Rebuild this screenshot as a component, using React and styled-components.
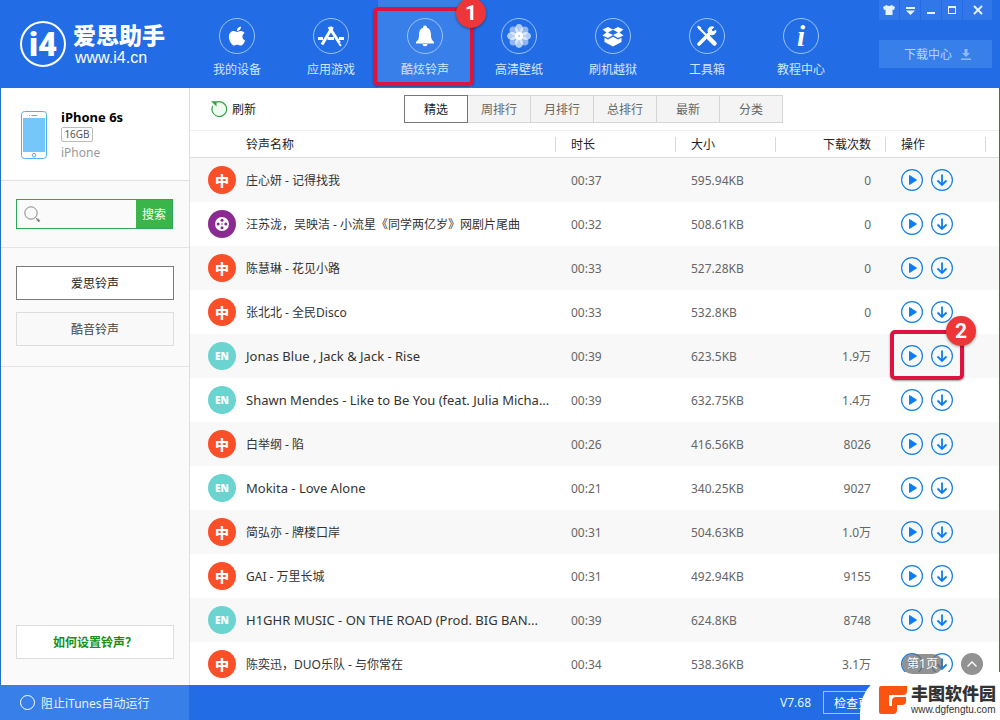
import React, { useState } from 'react';
import styled, { createGlobalStyle } from 'styled-components';
import { FaApple } from 'react-icons/fa';

const GlobalStyle = createGlobalStyle`
    * {
        box-sizing: border-box;
    }
    body {
        margin: 0;
        font-family: 'Noto Sans', 'Noto Sans CJK SC', sans-serif;
        font-size: 12px;
        color: #333;
    }
    button, input {
        font: inherit;
        color: inherit;
        margin: 0;
        padding: 0;
    }
    button {
        cursor: pointer;
    }
`
const Window = styled.div`
    display: flex;
    flex-direction: column;
    height: 100vh;
    background-color: #fff;
    position: relative;
`

/* header */
const Header = styled.header`
    display: flex;
    height: 88px;
    flex-shrink: 0;
    background-color: #226de6;
    color: #fff;
`
const Brand = styled.a`
    display: flex;
    gap: 7px;
    width: 190px;
    padding: 20px 0 0 20px;
    color: #fff;
    text-decoration: none;
`
const BrandName = styled.div`
    font-size: 23px;
    font-weight: 900;
    line-height: 28px;
    padding-top: 1px;
`
const BrandUrl = styled.div`
    font-family: 'Liberation Sans', sans-serif;
    font-size: 16px;
    line-height: 18px;
    padding-left: 2px;
`
const Nav = styled.nav`
    display: flex;
    flex: 1;
`
const NavItem = styled.a`
    position: relative;
    display: flex;
    flex-direction: column;
    align-items: center;
    gap: 7px;
    width: 94px;
    padding-top: 18px;
    line-height: 18px;
    color: #d3e6ff;
    text-decoration: none;
    background-color: ${props => props.$active ? '#397fe9' : 'transparent'};
`
const NavCircle = styled.span`
    display: flex;
    align-items: center;
    justify-content: center;
    width: 36px;
    height: 36px;
    border: 1px solid #9cc4fb;
    border-radius: 50%;
    color: #fff;
`
const HeaderRight = styled.div`
    display: flex;
    flex-direction: column;
    gap: 20px;
    width: 113px;
    margin-right: 8px;
`
const WindowButtons = styled.div`
    display: flex;
    gap: 1px;
    height: 20px;
`
const WindowButton = styled.button`
    display: flex;
    align-items: center;
    justify-content: center;
    flex: ${props => props.$wide ? '1' : '0 0 20px'};
    border: 0;
    background-color: #3177e9;
    color: #e6f3ff;
`
const DownloadCenter = styled.button`
    display: flex;
    align-items: center;
    justify-content: center;
    gap: 9px;
    height: 28px;
    padding-left: 4px;
    border: 0;
    background-color: #397fea;
    color: #b5d4fb;
`

/* numbered marks */
const Mark = styled.span`
    position: absolute;
    inset: ${props => props.$inset};
    border: 4px solid #dc1440;
    border-radius: 5px;
    box-shadow: 0 1px 2px rgba(0,0,0,0.4);
    pointer-events: none;
    z-index: 2;
`
const MarkNumber = styled.span`
    position: absolute;
    top: ${props => props.$top};
    right: -16px;
    width: 30px;
    height: 30px;
    border-radius: 50%;
    background-color: #ee3638;
    box-shadow: 0 1px 3px rgba(0,0,0,0.4);
    color: #fff;
    font-family: Roboto, sans-serif;
    font-size: 21px;
    font-weight: bold;
    line-height: 30px;
    text-align: center;
`

/* body */
const Body = styled.div`
    display: flex;
    flex: 1;
    min-height: 0;
    border-left: 1px solid #2470c8;
    border-right: 1px solid #2470a8;
`
const Sidebar = styled.aside`
    display: flex;
    flex-direction: column;
    width: 189px;
    flex-shrink: 0;
    background-color: #fafafa;
    border-right: 1px solid #ddd;
`
const Device = styled.section`
    display: flex;
    gap: 14px;
    height: 93px;
    padding: 19px 0 0 20px;
    background-color: #fff;
    border-bottom: 1px solid #e0e0e0;
`
const DeviceName = styled.div`
    font-size: 13px;
    font-weight: bold;
    line-height: 20px;
    color: #000;
`
const DeviceSize = styled.div`
    width: 32px;
    height: 15px;
    border: 1px solid #bbb;
    border-radius: 2px;
    font-size: 10px;
    line-height: 13px;
    text-align: center;
    color: #555;
`
const DeviceModel = styled.div`
    line-height: 22px;
    color: #999;
`
const SideSection = styled.section`
    display: flex;
    flex-direction: column;
    gap: 12px;
    padding: ${props => props.$padding};
    border-bottom: 1px solid #e4e4e4;
`
const Search = styled.form`
    display: flex;
    align-items: center;
    height: 30px;
    padding-left: 7px;
    margin-right: 1px;
    border: 1px solid #2ea556;
`
const SearchInput = styled.input`
    flex: 1;
    min-width: 0;
    height: 28px;
    margin-left: 6px;
    border: 0;
    outline: none;
    background: transparent;
`
const SearchButton = styled.button`
    width: 36px;
    height: 28px;
    border: 0;
    background-color: #39b54a;
    color: #fff;
`
const SideButton = styled.button`
    height: 34px;
    border: 1px solid ${props => props.$active ? '#7a7a7a' : '#ddd'};
    background-color: ${props => props.$active ? '#fff' : '#f9f9f9'};
    color: ${props => props.$active ? '#222' : '#444'};
`
const HelpButton = styled.button`
    height: 34px;
    margin: auto 15px 26px;
    border: 1px solid #ddd;
    background-color: #fff;
    color: #14901a;
    font-weight: bold;
`
const Main = styled.main`
    position: relative;
    flex: 1;
    min-width: 0;
    overflow: hidden;
`
const Toolbar = styled.div`
    display: grid;
    grid-template-columns: 1fr auto 1fr;
    align-items: center;
    height: 43px;
    padding-right: 2px;
    padding-bottom: 1px;
    border-bottom: 1px solid #f0f0f0;
`
const Refresh = styled.button`
    display: flex;
    align-items: center;
    gap: 4px;
    padding-left: 20px;
    border: 0;
    background: none;
    color: #222;
`
const Tabs = styled.div`
    display: flex;
    height: 28px;
`
const Tab = styled.button`
    width: 63px;
    border: 1px solid #d4d4d4;
    border-left-width: 0;
    background-color: #f4f4f4;
    color: #666;
    ${props => props.$active && `
        width: 64px;
        border-color: #777;
        border-left-width: 1px;
        background-color: #fff;
        color: #222;
    `}
`
const Table = styled.table`
    width: 100%;
    table-layout: fixed;
    border-spacing: 0;
`
const Th = styled.th`
    width: ${props => props.$width || 'auto'};
    height: 27px;
    padding: 0 15px 1px;
    padding-left: ${props => props.$name ? '56px' : '15px'};
    border-bottom: 1px solid #ddd;
    font-weight: normal;
    text-align: ${props => props.$right ? 'right' : 'left'};
    color: #222;
    background: linear-gradient(#d8d8d8, #d8d8d8) no-repeat right center / 1px 15px;
`
const ThEnd = styled.td`
    width: 13px;
    padding: 0;
    border-bottom: 1px solid #ddd;
`
const Row = styled.tr`
    &:nth-child(odd) {
        background-color: #f8f8f8;
    }
`
const Td = styled.td`
    height: 44px;
    padding: 0 15px;
    text-align: ${props => props.$right ? 'right' : 'left'};
    color: #666;
`
const NameTd = styled.td`
    padding: 0 0 0 18px;
`
const EndTd = styled.td`
    padding: 0;
`
const Song = styled.div`
    display: flex;
    align-items: center;
    gap: 10px;
    color: #333;
`
const SongName = styled.span`
    font-size: ${props => props.$kind === 'en' ? '13px' : '12px'};
    white-space: nowrap;
`
const colors = { cn: '#fa4f28', en: '#6bd4d0', film: '#8b2a91' };
const Badge = styled.span`
    display: flex;
    align-items: center;
    justify-content: center;
    width: 28px;
    height: 28px;
    flex-shrink: 0;
    border-radius: 50%;
    background-color: ${props => colors[props.$kind]};
    color: #fff;
    font-size: ${props => props.$kind === 'cn' ? '14px' : '10px'};
    font-weight: 900;
`
const Actions = styled.div`
    position: relative;
    display: flex;
    gap: 8px;
    width: 52px;
`
const ActionButton = styled.button`
    display: flex;
    width: 22px;
    height: 22px;
    border: 0;
    background: none;
    color: #1480e8;
`
const Floating = styled.div`
    position: absolute;
    right: 16px;
    bottom: 10px;
    display: flex;
    align-items: center;
    gap: 18px;
    z-index: 3;
`
const PageLabel = styled.span`
    width: 41px;
    height: 20px;
    border-radius: 10px;
    background-color: rgba(110,110,110,0.75);
    color: #fff;
    line-height: 20px;
    text-align: center;
`
const TopButton = styled.button`
    display: flex;
    align-items: center;
    justify-content: center;
    width: 22px;
    height: 22px;
    border: 0;
    border-radius: 50%;
    background-color: #929292;
    color: #fff;
`

/* footer */
const Footer = styled.footer`
    display: flex;
    align-items: center;
    height: 35px;
    flex-shrink: 0;
    background-color: #226de6;
    color: #fff;
`
const ITunes = styled.label`
    display: flex;
    align-items: center;
    gap: 6px;
    width: 189px;
    height: 35px;
    padding-left: 20px;
    background-color: #397fe9;
    color: #e6f2ff;
`
const Round = styled.input`
    appearance: none;
    width: 15px;
    height: 15px;
    border: 1px solid #fff;
    border-radius: 50%;
    &:checked {
        background-color: #fff;
    }
`
const Version = styled.span`
    margin-left: auto;
    margin-right: 12px;
    color: #e6f2ff;
`
const Update = styled.button`
    width: 70px;
    height: 23px;
    margin-right: 107px;
    border: 1px solid #9cc4fb;
    background: none;
`
const SiteMark = styled.a`
    position: absolute;
    right: 0;
    bottom: 0;
    display: flex;
    align-items: center;
    gap: 4px;
    width: 140px;
    height: 48px;
    padding: 8px 0 0 19px;
    border-radius: 40px 0 0 0;
    background-color: #fff;
    color: #333;
    text-decoration: none;
    z-index: 2;
    svg {
        flex-shrink: 0;
    }
`
const SiteName = styled.div`
    font-size: 17px;
    font-weight: 900;
    line-height: 20px;
    white-space: nowrap;
`
const SiteUrl = styled.div`
    font-family: 'Liberation Sans', sans-serif;
    font-size: 10px;
    line-height: 12px;
`

const AppStoreIcon = () => (
    <svg width="28" height="24" viewBox="0 0 28 24" fill="none" stroke="currentColor" strokeWidth="3">
        <path d="M15.5 3 L5 20.5" />
        <path d="M12 3 L22.5 19" />
        <path d="M1 14.5 H6 M10.5 14.5 H17 M22 14.5 H27" />
        <path d="M22 19.5 L24 22" strokeWidth="2" />
    </svg>
);

const BellIcon = () => (
    <svg width="20" height="22" viewBox="0 0 20 22" fill="currentColor">
        <circle cx="10" cy="2.4" r="2" />
        <path d="M10 2.5 C5.5 2.5 4 6 4 10 C4 14 3 15 1 17 V18.5 H19 V17 C17 15 16 14 16 10 C16 6 14.5 2.5 10 2.5 Z" />
        <path d="M7.5 19 H12.5 A2.5 2.3 0 0 1 7.5 19 Z" />
    </svg>
);

const FlowerIcon = () => (
    <svg width="26" height="26" viewBox="0 0 26 26">
        {[0, 45, 90, 135, 180, 225, 270, 315].map(angle => (
            <ellipse key={angle} cx="13" cy="6" rx="4" ry="5" fill="#fff" fillOpacity={angle % 90 ? 0.5 : 0.65} transform={`rotate(${angle} 13 13)`} />
        ))}
        <circle cx="13" cy="13" r="4" fill="#fff" />
        <circle cx="13" cy="13" r="1" fill="#9cc4fb" />
    </svg>
);

const BoxIcon = () => (
    <svg width="24" height="22" viewBox="0 0 24 22" fill="none">
        <path d="M12 4.5 L7 2 L1.5 4.5 L5.5 7.5 L1.5 10.5 L7 13 L12 10 L17 13 L22.5 10.5 L18.5 7.5 L22.5 4.5 L17 2 Z" fill="currentColor" />
        <path d="M12 4.8 L17 7.5 L12 10 L7 7.5 Z" fill="#226de6" />
        <path d="M3.5 12.8 L7 14.4 L12 11.8 L17 14.4 L20.5 12.8 V17 L12 21.5 L3.5 17 Z" fill="currentColor" />
    </svg>
);

const ToolsIcon = () => (
    <svg width="22" height="22" viewBox="0 0 22 22" fill="none" stroke="currentColor">
        <path d="M2.5 2.5 L11 11" strokeWidth="2" />
        <path d="M1.5 1.5 L5 3.3" strokeWidth="2" />
        <path d="M12.5 12.5 L18.5 18.5" strokeWidth="4.5" strokeLinecap="round" />
        <path d="M3 19 L14 8" strokeWidth="3.6" strokeLinecap="round" />
        <path d="M17.8 2.2 A4 4 0 1 0 20 5.5 L16.8 6.8 L15 4.8 Z" fill="currentColor" strokeWidth="1" />
    </svg>
);

const InfoIcon = () => (
    <svg width="22" height="34" viewBox="0 0 22 34">
        <text x="11" y="27" textAnchor="middle" fill="currentColor" fontFamily="Liberation Serif, serif" fontSize="29" fontWeight="bold" fontStyle="italic">i</text>
    </svg>
);

const ShirtIcon = () => (
    <svg width="12" height="10" viewBox="0 0 12 10" fill="currentColor">
        <path d="M3.5 0 Q6 2 8.5 0 L12 2 L11 5 L9.5 4.5 V10 H2.5 V4.5 L1 5 L0 2 Z" />
    </svg>
);

const MenuIcon = () => (
    <svg width="9" height="9" viewBox="0 0 9 9" fill="currentColor">
        <path d="M0 1 H9 V3 H0 Z M0 4.5 H9 L4.5 9 Z" />
    </svg>
);

const MinIcon = () => (
    <svg width="8" height="8" viewBox="0 0 8 8" fill="currentColor">
        <path d="M0 6 H8 V8 H0 Z" />
    </svg>
);

const MaxIcon = () => (
    <svg width="8" height="8" viewBox="0 0 8 8" fill="currentColor">
        <path d="M0 0 H8 V8 H0 Z M1 2 V7 H7 V2 Z" fillRule="evenodd" />
    </svg>
);

const CloseIcon = () => (
    <svg width="10" height="10" viewBox="0 0 10 10" stroke="currentColor" strokeWidth="2">
        <path d="M1 1 L9 9 M9 1 L1 9" />
    </svg>
);

const FilmIcon = () => (
    <svg width="14" height="14" viewBox="0 0 14 14">
        <circle cx="7" cy="7" r="7" fill="#fff" />
        <g fill="#8b2a91">
            <circle cx="7" cy="3.2" r="1.5" />
            <circle cx="7" cy="10.8" r="1.5" />
            <circle cx="3.2" cy="7" r="1.5" />
            <circle cx="10.8" cy="7" r="1.5" />
            <circle cx="7" cy="7" r="0.8" />
        </g>
    </svg>
);

const navItems = [
    { label: '我的设备', icon: <FaApple size={22} /> },
    { label: '应用游戏', icon: <AppStoreIcon /> },
    { label: '酷炫铃声', icon: <BellIcon />, mark: 1 },
    { label: '高清壁纸', icon: <FlowerIcon /> },
    { label: '刷机越狱', icon: <BoxIcon /> },
    { label: '工具箱', icon: <ToolsIcon /> },
    { label: '教程中心', icon: <InfoIcon /> },
];

const tabs = ['精选', '周排行', '月排行', '总排行', '最新', '分类'];

const songs = [
    { kind: 'cn', name: '庄心妍 - 记得找我', time: '00:37', size: '595.94KB', count: '0' },
    { kind: 'film', name: '汪苏泷，吴映洁 - 小流星《同学两亿岁》网剧片尾曲', time: '00:32', size: '508.61KB', count: '0' },
    { kind: 'cn', name: '陈慧琳 - 花见小路', time: '00:33', size: '527.28KB', count: '0' },
    { kind: 'cn', name: '张北北 - 全民Disco', time: '00:33', size: '532.8KB', count: '0' },
    { kind: 'en', name: 'Jonas Blue , Jack & Jack - Rise', time: '00:39', size: '623.5KB', count: '1.9万', mark: 2 },
    { kind: 'en', name: 'Shawn Mendes - Like to Be You (feat. Julia Micha...', time: '00:39', size: '632.75KB', count: '1.4万' },
    { kind: 'cn', name: '白举纲 - 陷', time: '00:26', size: '416.56KB', count: '8026' },
    { kind: 'en', name: 'Mokita - Love Alone', time: '00:21', size: '340.25KB', count: '9027' },
    { kind: 'cn', name: '简弘亦 - 牌楼口岸', time: '00:31', size: '504.63KB', count: '1.0万' },
    { kind: 'cn', name: 'GAI - 万里长城', time: '00:31', size: '492.94KB', count: '9155' },
    { kind: 'en', name: 'H1GHR MUSIC - ON THE ROAD (Prod. BIG BAN...', time: '00:39', size: '624.8KB', count: '8748' },
    { kind: 'cn', name: '陈奕迅，DUO乐队 - 与你常在', time: '00:34', size: '538.36KB', count: '3.1万' },
];

function SongRow({ song }) {
    return (
        <Row>
            <NameTd>
                <Song>
                    <Badge $kind={song.kind}>
                        {song.kind === 'cn' && '中'}
                        {song.kind === 'en' && 'EN'}
                        {song.kind === 'film' && <FilmIcon />}
                    </Badge>
                    <SongName $kind={song.kind}>{song.name}</SongName>
                </Song>
            </NameTd>
            <Td>{song.time}</Td>
            <Td>{song.size}</Td>
            <Td $right>{song.count}</Td>
            <Td>
                <Actions>
                    <ActionButton aria-label="播放">
                        <svg width="22" height="22" viewBox="0 0 22 22">
                            <circle cx="11" cy="11" r="10.4" fill="none" stroke="currentColor" strokeWidth="1.2" />
                            <path d="M8.5 6.5 L15.5 11 L8.5 15.5 Z" fill="#0a7cf5" stroke="#0a7cf5" strokeLinejoin="round" />
                        </svg>
                    </ActionButton>
                    <ActionButton aria-label="下载">
                        <svg width="22" height="22" viewBox="0 0 22 22" fill="none" stroke="currentColor">
                            <circle cx="11" cy="11" r="10.4" strokeWidth="1.2" />
                            <path d="M11 5.5 V16 M6.5 11.5 L11 16 L15.5 11.5" stroke="#0a7cf5" strokeWidth="1.8" />
                        </svg>
                    </ActionButton>
                    {song.mark && <Mark $inset="-15px -11px -13px"><MarkNumber $top="-18px">{song.mark}</MarkNumber></Mark>}
                </Actions>
            </Td>
            <EndTd />
        </Row>
    );
}

function App() {
    const [tab, setTab] = useState('精选');
    const [source, setSource] = useState('爱思铃声');

    return (
        <Window>
            <GlobalStyle />
            <Header>
                <Brand href="#">
                    <svg width="46" height="48" viewBox="0 0 46 48">
                        <circle cx="23" cy="24" r="22" fill="none" stroke="#fff" strokeWidth="2" />
                        <text x="23" y="36" textAnchor="middle" fill="#fff" fontFamily="Roboto, sans-serif" fontSize="33" fontWeight="900">i4</text>
                    </svg>
                    <div>
                        <BrandName>爱思助手</BrandName>
                        <BrandUrl>www.i4.cn</BrandUrl>
                    </div>
                </Brand>
                <Nav>
                    {navItems.map(item => (
                        <NavItem key={item.label} href="#" $active={!!item.mark}>
                            <NavCircle>{item.icon}</NavCircle>
                            {item.label}
                            {item.mark && <Mark $inset="7px -2px 2px -5px"><MarkNumber $top="-13px">{item.mark}</MarkNumber></Mark>}
                        </NavItem>
                    ))}
                </Nav>
                <HeaderRight>
                    <WindowButtons>
                        <WindowButton aria-label="皮肤"><ShirtIcon /></WindowButton>
                        <WindowButton aria-label="菜单"><MenuIcon /></WindowButton>
                        <WindowButton aria-label="最小化"><MinIcon /></WindowButton>
                        <WindowButton aria-label="最大化"><MaxIcon /></WindowButton>
                        <WindowButton aria-label="关闭" $wide><CloseIcon /></WindowButton>
                    </WindowButtons>
                    <DownloadCenter>
                        下载中心
                        <svg width="10" height="11" viewBox="0 0 10 11" fill="#8fbcf8">
                            <path d="M3.5 0 H6.5 V4 H9 L5 8 L1 4 H3.5 Z M0 9.5 H10 V11 H0 Z" />
                        </svg>
                    </DownloadCenter>
                </HeaderRight>
            </Header>
            <Body>
                <Sidebar>
                    <Device>
                        <svg width="26" height="56" viewBox="0 0 26 56">
                            <rect x="0.5" y="4.5" width="25" height="47" rx="3" fill="#fff" stroke="#58aee6" />
                            <rect x="2" y="11" width="22" height="34" fill="#74c6fb" />
                            <path d="M8 8.5 H9 M10.5 8.5 H16" stroke="#58aee6" />
                            <circle cx="13" cy="48.2" r="1.8" fill="none" stroke="#58aee6" />
                        </svg>
                        <div>
                            <DeviceName>iPhone 6s</DeviceName>
                            <DeviceSize>16GB</DeviceSize>
                            <DeviceModel>iPhone</DeviceModel>
                        </div>
                    </Device>
                    <SideSection $padding="18px 15px">
                        <Search onSubmit={e => e.preventDefault()}>
                            <svg width="17" height="17" viewBox="0 0 17 17" fill="none" stroke="#888">
                                <circle cx="7" cy="7" r="6.2" />
                                <path d="M11.5 11.5 L13.5 13.5" />
                                <path d="M13 13 L15.5 15.5" strokeWidth="2.4" />
                            </svg>
                            <SearchInput aria-label="搜索铃声" />
                            <SearchButton type="submit">搜索</SearchButton>
                        </Search>
                    </SideSection>
                    <SideSection $padding="18px 15px 20px">
                        {['爱思铃声', '酷音铃声'].map(name => (
                            <SideButton key={name} $active={name === source} onClick={() => setSource(name)}>{name}</SideButton>
                        ))}
                    </SideSection>
                    <HelpButton>如何设置铃声？</HelpButton>
                </Sidebar>
                <Main>
                    <Toolbar>
                        <Refresh>
                            <svg width="18" height="18" viewBox="0 0 18 18" fill="none" stroke="#35a047">
                                <path d="M5 2.6 A7.4 7.4 0 1 0 13 2.6 Q9 0.6 5 2.6" fill="#effaf0" stroke="none" />
                                <path d="M6 2.4 Q9.5 0.9 12.8 2.6 A7.4 7.4 0 1 1 2.6 6" strokeWidth="1.2" />
                                <path d="M1 1.2 H6.5 V6.5 Z" fill="#35a047" stroke="none" />
                            </svg>
                            刷新
                        </Refresh>
                        <Tabs>
                            {tabs.map(name => (
                                <Tab key={name} $active={name === tab} onClick={() => setTab(name)}>{name}</Tab>
                            ))}
                        </Tabs>
                    </Toolbar>
                    <Table>
                        <thead>
                            <tr>
                                <Th $name>铃声名称</Th>
                                <Th $width="120px">时长</Th>
                                <Th $width="100px">大小</Th>
                                <Th $width="110px" $right>下载次数</Th>
                                <Th $width="100px">操作</Th>
                                <ThEnd />
                            </tr>
                        </thead>
                        <tbody>
                            {songs.map(song => <SongRow key={song.name} song={song} />)}
                        </tbody>
                    </Table>
                    <Floating>
                        <PageLabel>第1页</PageLabel>
                        <TopButton aria-label="返回顶部">
                            <svg width="10" height="6" viewBox="0 0 10 6" fill="none" stroke="currentColor" strokeWidth="1.3">
                                <path d="M0.5 5.5 L5 1 L9.5 5.5" />
                            </svg>
                        </TopButton>
                    </Floating>
                </Main>
            </Body>
            <Footer>
                <ITunes>
                    <Round type="checkbox" />
                    阻止iTunes自动运行
                </ITunes>
                <Version>V7.68</Version>
                <Update>检查更新</Update>
            </Footer>
            <SiteMark href="#">
                <svg width="28" height="28" viewBox="0 0 28 28" fill="#fa5410">
                    <path d="M2 0 H28 V5 Q28 9 24 9 H10 V20 H13 V15 Q13 11 17 11 H27 V15 Q27 19 23 19 H18 V24 Q18 28 14 28 H2 Q0 28 0 26 V2 Q0 0 2 0 Z" />
                </svg>
                <div>
                    <SiteName>丰图软件园</SiteName>
                    <SiteUrl>www.dgfengtu.com</SiteUrl>
                </div>
            </SiteMark>
        </Window>
    );
}

export default App;
